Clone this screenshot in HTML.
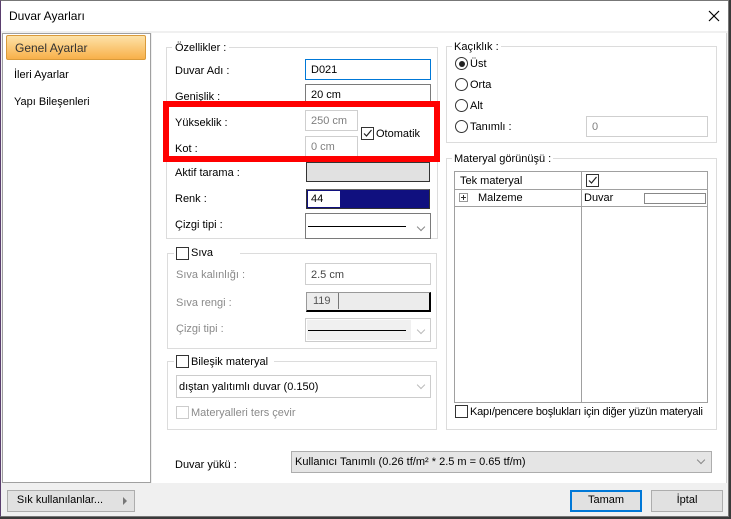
<!DOCTYPE html>
<html><head><meta charset="utf-8"><style>
*{box-sizing:border-box;margin:0;padding:0}
body{width:731px;height:519px;background:#3a3a3a;font-family:"Liberation Sans",sans-serif;font-size:11px;color:#000;position:relative;overflow:hidden}
.a{position:absolute}
.t{position:absolute;white-space:nowrap;line-height:14px}
.g{color:#8a8a8a}
.grp{position:absolute;border:1px solid #dcdcdc}
.in{position:absolute;border:1px solid #7a7a7a;background:#fff;padding:2px 0 0 5px;line-height:14px}
.dis{border-color:#cfcfcf;color:#7f7f7f}
.cb{position:absolute;width:13px;height:13px;border:1px solid #333;background:#fff}
.rd{position:absolute;width:13px;height:13px;border:1px solid #333;border-radius:50%;background:#fff}
.chev{position:absolute;width:6px;height:6px;border-right:1px solid #888;border-bottom:1px solid #888;transform:rotate(45deg)}
.btn{position:absolute;background:#e1e1e1;border:1px solid #adadad;text-align:center;line-height:19px}
</style></head><body>
<div class="a" style="left:0;top:0;width:729px;height:517px;background:#f0f0f0;border:1px solid #777;border-left-color:#5a3e6e"></div>
<div class="a" style="left:1px;top:1px;width:727px;height:30px;background:#fff"></div>
<div class="t" style="left:9px;top:9px;font-size:12px">Duvar Ayarları</div>
<svg class="a" style="left:708px;top:10px" width="12" height="12"><path d="M1 1L11 11M11 1L1 11" stroke="#000" stroke-width="1.2"/></svg>

<div class="a" style="left:2px;top:33px;width:149px;height:450px;background:#fff;border:1px solid #a0a0a0"></div>
<div class="a" style="left:6px;top:35px;width:140px;height:25px;border:1px solid #d99a3a;border-radius:2px;background:linear-gradient(#fde2a8,#f8b04a)"></div>
<div class="t" style="left:15px;top:41px;color:#333;font-size:12px">Genel Ayarlar</div>
<div class="t" style="left:14px;top:68px">İleri Ayarlar</div>
<div class="t" style="left:14px;top:95px">Yapı Bileşenleri</div>

<div class="a" style="left:152px;top:33px;width:575px;height:450px;background:#fff;border-right:1px solid #d0d0d0"></div>

<div class="grp" style="left:166px;top:47px;width:272px;height:192px"></div>
<div class="t" style="left:172px;top:41px;background:#fff;padding:0 3px">Özellikler :</div>
<div class="t" style="left:175px;top:64px">Duvar Adı :</div>
<div class="t" style="left:175px;top:90px">Genişlik :</div>
<div class="t" style="left:175px;top:116px">Yükseklik :</div>
<div class="t" style="left:175px;top:142px">Kot :</div>
<div class="t" style="left:175px;top:166px">Aktif tarama :</div>
<div class="t" style="left:175px;top:192px">Renk :</div>
<div class="t" style="left:175px;top:218px">Çizgi tipi :</div>
<div class="in" style="left:305px;top:59px;width:126px;height:21px;border-color:#0078d7;padding-top:3px">D021</div>
<div class="in" style="left:305px;top:84px;width:126px;height:21px;padding-top:3px">20 cm</div>
<div class="in dis" style="left:305px;top:110px;width:53px;height:21px;padding-top:3px">250 cm</div>
<div class="in dis" style="left:305px;top:136px;width:53px;height:21px;padding-top:3px">0 cm</div>
<div class="cb" style="left:361px;top:127px"></div>
<svg class="a" style="left:362px;top:128px" width="11" height="11"><path d="M2 5.5L4.5 8L9.5 2" stroke="#222" fill="none" stroke-width="1.2"/></svg>
<div class="t" style="left:376px;top:127px">Otomatik</div>
<div class="a" style="left:306px;top:162px;width:124px;height:20px;border:1px solid #333;background:#efefef;background-image:radial-gradient(#b8b8b8 0.5px,transparent 0.6px);background-size:2px 2px"></div>
<div class="a" style="left:306px;top:189px;width:124px;height:20px;border:1px solid #333;border-top-color:#666;background:#10107f"></div>
<div class="a" style="left:308px;top:191px;width:32px;height:16px;background:#fff;padding:2px 0 0 3px;line-height:12px">44</div>
<div class="in" style="left:305px;top:213px;width:126px;height:26px"></div>
<div class="a" style="left:308px;top:226px;width:98px;height:1px;background:#000"></div>
<div class="chev" style="left:418px;top:224px"></div>

<div class="a" style="left:163px;top:101px;width:277px;height:61px;border:6px solid #f00"></div>

<div class="grp" style="left:167px;top:253px;width:270px;height:96px"></div>
<div class="a" style="left:174px;top:246px;width:66px;height:14px;background:#fff"></div>
<div class="cb" style="left:176px;top:247px"></div>
<div class="t" style="left:191px;top:246px">Sıva</div>
<div class="t g" style="left:176px;top:268px">Sıva kalınlığı :</div>
<div class="t g" style="left:176px;top:296px">Sıva rengi :</div>
<div class="t g" style="left:176px;top:322px">Çizgi tipi :</div>
<div class="in dis" style="left:305px;top:263px;width:126px;height:22px;color:#444;padding-top:4px">2.5 cm</div>
<div class="a" style="left:306px;top:292px;width:125px;height:20px;border:1px solid #999;border-right:2px solid #000;border-bottom:2px solid #000;background:#ececec"></div>
<div class="a" style="left:307px;top:293px;width:32px;height:16px;border-right:1px solid #777;padding:2px 0 0 6px;line-height:12px;color:#555">119</div>
<div class="a" style="left:305px;top:318px;width:126px;height:24px;border:1px solid #ccc;background:#fff"></div>
<div class="a" style="left:307px;top:320px;width:104px;height:20px;background:#f0f0f0"></div>
<div class="a" style="left:308px;top:330px;width:98px;height:1px;background:#000"></div>
<div class="chev" style="left:418px;top:327px;border-color:#bbb"></div>

<div class="grp" style="left:167px;top:361px;width:270px;height:69px"></div>
<div class="a" style="left:174px;top:354px;width:100px;height:14px;background:#fff"></div>
<div class="cb" style="left:176px;top:355px"></div>
<div class="t" style="left:191px;top:355px">Bileşik materyal</div>
<div class="in" style="left:176px;top:375px;width:255px;height:23px;border-color:#ccc;padding:4px 0 0 2px">dıştan yalıtımlı duvar (0.150)</div>
<div class="chev" style="left:418px;top:382px;border-color:#bbb"></div>
<div class="cb" style="left:176px;top:406px;border-color:#ccc"></div>
<div class="t g" style="left:191px;top:406px">Materyalleri ters çevir</div>

<div class="grp" style="left:446px;top:46px;width:271px;height:97px"></div>
<div class="t" style="left:452px;top:40px;background:#fff;padding:0 2px">Kaçıklık :</div>
<div class="rd" style="left:455px;top:57px"></div><div class="a" style="left:458.5px;top:60.5px;width:6px;height:6px;border-radius:50%;background:#222"></div>
<div class="t" style="left:470px;top:57px">Üst</div>
<div class="rd" style="left:455px;top:78px"></div><div class="t" style="left:470px;top:78px">Orta</div>
<div class="rd" style="left:455px;top:99px"></div><div class="t" style="left:470px;top:99px">Alt</div>
<div class="rd" style="left:455px;top:120px"></div><div class="t" style="left:470px;top:120px">Tanımlı :</div>
<div class="in dis" style="left:586px;top:116px;width:122px;height:21px;padding-top:3px">0</div>

<div class="grp" style="left:446px;top:158px;width:271px;height:272px"></div>
<div class="t" style="left:452px;top:152px;background:#fff;padding:0 2px">Materyal görünüşü :</div>
<div class="a" style="left:454px;top:171px;width:254px;height:232px;border:1px solid #a0a0a0"></div>
<div class="a" style="left:581px;top:171px;width:1px;height:232px;background:#a0a0a0"></div>
<div class="a" style="left:454px;top:189px;width:254px;height:1px;background:#a0a0a0"></div>
<div class="a" style="left:454px;top:206px;width:254px;height:1px;background:#a0a0a0"></div>
<div class="t" style="left:460px;top:174px">Tek materyal</div>
<div class="cb" style="left:586px;top:174px"></div>
<svg class="a" style="left:587px;top:175px" width="11" height="11"><path d="M2 5.5L4.5 8L9.5 2" stroke="#222" fill="none" stroke-width="1.2"/></svg>
<div class="a" style="left:459px;top:193px;width:9px;height:9px;border:1px solid #999"></div>
<div class="a" style="left:461px;top:197px;width:5px;height:1px;background:#333"></div>
<div class="a" style="left:463px;top:195px;width:1px;height:5px;background:#333"></div>
<div class="t" style="left:478px;top:191px">Malzeme</div>
<div class="t" style="left:584px;top:191px">Duvar</div>
<div class="a" style="left:644px;top:193px;width:62px;height:11px;border:1px solid #888"></div>
<div class="cb" style="left:455px;top:405px"></div>
<div class="t" style="left:470px;top:405px;letter-spacing:-0.2px">Kapı/pencere boşlukları için diğer yüzün materyali</div>

<div class="t" style="left:175px;top:458px">Duvar yükü :</div>
<div class="a" style="left:291px;top:451px;width:421px;height:22px;background:#e5e5e5;border:1px solid #adadad"></div>
<div class="t" style="left:295px;top:455px">Kullanıcı Tanımlı (0.26 tf/m² * 2.5 m = 0.65 tf/m)</div>
<div class="chev" style="left:698px;top:457px"></div>

<div class="btn" style="left:7px;top:490px;width:128px;height:22px;padding-right:22px">Sık kullanılanlar...</div>
<div class="a" style="left:123px;top:497px;width:0;height:0;border-left:4px solid #777;border-top:4px solid transparent;border-bottom:4px solid transparent"></div>
<div class="btn" style="left:570px;top:490px;width:72px;height:22px;border:2px solid #0078d7;line-height:17px">Tamam</div>
<div class="btn" style="left:651px;top:490px;width:72px;height:22px">İptal</div>
</body></html>
